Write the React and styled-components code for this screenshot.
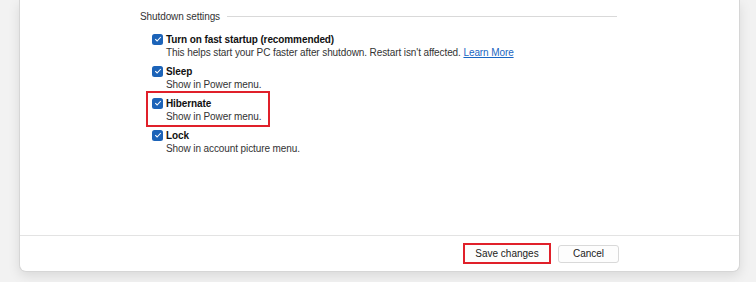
import React from "react";
import styled, { createGlobalStyle } from "styled-components";

const ITEMS = [
  {
    title: "Turn on fast startup (recommended)",
    desc: "This helps start your PC faster after shutdown. Restart isn't affected.",
    link: "Learn More",
  },
  { title: "Sleep", desc: "Show in Power menu." },
  { title: "Hibernate", desc: "Show in Power menu.", marked: true },
  { title: "Lock", desc: "Show in account picture menu." },
];

const GlobalStyle = createGlobalStyle`
  html, body {
    margin: 0;
    padding: 0;
    background: #f2f2f2;
  }
  body {
    font-family: "Liberation Sans", Arial, sans-serif;
    color: #1a1a1a;
  }
`;

const Check = () => (
  <CheckBox>
    <svg width="8" height="8" viewBox="0 0 8 8">
      <path d="M1.3 4.2 L3.1 6 L6.8 2" fill="none" stroke="#fff" strokeWidth="1.1" />
    </svg>
  </CheckBox>
);

const App = () => {
  return (
    <>
      <GlobalStyle />
      <Page>
        <Window>
          <Content>
            <GroupHeader>
              <GroupTitle>Shutdown settings</GroupTitle>
              <GroupRule />
            </GroupHeader>
            <List>
              {ITEMS.map((item) => (
                <Item key={item.title} $marked={item.marked}>
                  <ItemTitle>
                    <Check />
                    {item.title}
                  </ItemTitle>
                  <ItemDesc>
                    {item.desc}
                    {item.link && (
                      <>
                        {" "}
                        <Link>{item.link}</Link>
                      </>
                    )}
                  </ItemDesc>
                </Item>
              ))}
            </List>
          </Content>
          <Footer>
            <Button $marked>Save changes</Button>
            <Button>Cancel</Button>
          </Footer>
        </Window>
      </Page>
    </>
  );
};

const Page = styled.div`
  width: 756px;
  height: 282px;
  overflow: hidden;
  padding-left: 19px;
  box-sizing: border-box;
`;

const Window = styled.div`
  width: 721px;
  height: 272px;
  box-sizing: border-box;
  background: #ffffff;
  border: 1px solid #d6d6d6;
  border-top: none;
  border-radius: 0 0 7px 7px;
  box-shadow: 0 4px 12px rgba(0, 0, 0, 0.1);
  display: flex;
  flex-direction: column;
`;

const Content = styled.div`
  height: 236px;
  box-sizing: border-box;
  padding: 9px 0 0 120px;
  border-bottom: 1px solid #e3e3e3;
  font-size: 10px;
  letter-spacing: -0.1px;
`;

const GroupHeader = styled.div`
  display: flex;
  align-items: center;
  width: 477px;
  height: 14px;
`;

const GroupTitle = styled.span`
  color: #333;
  margin-right: 7px;
  white-space: nowrap;
`;

const GroupRule = styled.div`
  flex: 1;
  height: 1px;
  background: #d9d9d9;
`;

const List = styled.div`
  display: flex;
  flex-direction: column;
  padding: 9px 0 0 12px;
`;

const Item = styled.div`
  position: relative;
  height: 32px;

  &::after {
    content: "";
    display: ${(p) => (p.$marked ? "block" : "none")};
    position: absolute;
    left: -6px;
    top: -5px;
    width: 120px;
    height: 32px;
    border: 2px solid #e0202a;
  }
`;

const ItemTitle = styled.div`
  display: flex;
  align-items: center;
  height: 14px;
  font-weight: bold;
  color: #111;
  white-space: nowrap;
`;

const CheckBox = styled.span`
  width: 11px;
  height: 11px;
  border-radius: 2.5px;
  background: #1c63b8;
  display: inline-flex;
  align-items: center;
  justify-content: center;
  margin-right: 3px;
  flex-shrink: 0;
`;

const ItemDesc = styled.div`
  height: 14px;
  line-height: 14px;
  color: #333;
  padding-left: 14px;
  white-space: nowrap;
`;

const Link = styled.span`
  color: #1a66c2;
  text-decoration: underline;
`;

const Footer = styled.div`
  flex: 1;
  display: flex;
  align-items: center;
  justify-content: flex-end;
  gap: 7px;
  padding: 0 120px 0 0;
`;

const Button = styled.button`
  box-sizing: border-box;
  height: ${(p) => (p.$marked ? "21px" : "18px")};
  width: ${(p) => (p.$marked ? "88px" : "61px")};
  padding: 0;
  font-family: "Liberation Sans", Arial, sans-serif;
  font-size: 10px;
  color: #222;
  background: #fdfdfd;
  border: ${(p) => (p.$marked ? "2px solid #e0202a" : "1px solid #d9d9d9")};
  border-radius: ${(p) => (p.$marked ? "0" : "3px")};
  cursor: pointer;
`;

export default App;
